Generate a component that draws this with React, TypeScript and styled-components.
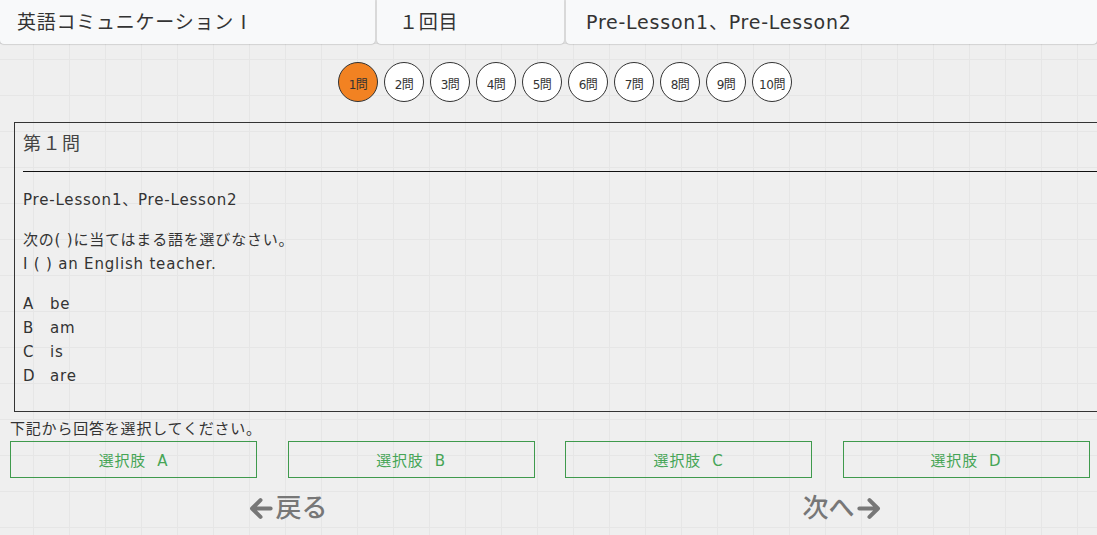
import React from "react";
import styled, { createGlobalStyle } from "styled-components";

const Global = createGlobalStyle`
  html, body { margin: 0; padding: 0; overflow: hidden; }
  body {
    font-family: "DejaVu Sans", "Noto Sans CJK JP", sans-serif;
    letter-spacing: 0.05em;
    color: #333;
    background-color: #efefef;
    background-image:
      linear-gradient(to right, #e6e6e6 1px, transparent 1px),
      linear-gradient(to bottom, #e6e6e6 1px, transparent 1px);
    background-size: 36px 36px;
    background-position: 33px 23px;
    min-height: 100vh;
  }
`;

const Header = styled.header`
  display: grid;
  grid-template-columns: 375px 187px 1fr;
  gap: 2px;
  height: 44px;
  background: #dcdcdc;
`;

const HeaderCell = styled.div<{ $pad: number; $cjk?: boolean }>`
  background: #f8f9fa;
  border-radius: 0 0 4px 4px;
  box-shadow: 0 1px 1px rgba(0, 0, 0, 0.12);
  display: flex;
  align-items: center;
  padding: 0 0 3px ${(p) => p.$pad}px;
  font-family: ${(p) => (p.$cjk ? '"Noto Sans CJK JP", sans-serif' : "inherit")};
  font-size: 19px;
  letter-spacing: 0.04em;
  color: #333;
  white-space: nowrap;
`;

const Main = styled.main`
  width: 1110px;
  padding: 0 10px;
`;

const Pager = styled.nav`
  display: flex;
  justify-content: center;
  gap: 6px;
  margin-top: 18px;
`;

const Dot = styled.div<{ $active?: boolean }>`
  width: 40px;
  height: 40px;
  box-sizing: border-box;
  border-radius: 50%;
  border: 1.5px solid #333;
  background: ${(p) => (p.$active ? "#f28222" : "#fff")};
  display: flex;
  align-items: center;
  justify-content: center;
  padding-top: 2px;
  font-size: 12px;
  color: #333;
  letter-spacing: -0.5px;
`;

const QuestionBox = styled.section`
  margin: 20px 0 0 4px;
  width: 1106px;
  box-sizing: border-box;
  border: 1px solid #333;
  padding: 8px 0 23px 8px;
  font-size: 15px;
  color: #333;
`;

const Title = styled.h2`
  margin: 0;
  font-size: 18px;
  font-weight: normal;
  line-height: 26px;
  color: #444;
  letter-spacing: 1.5px;
`;

const Rule = styled.hr`
  margin: 14px 0 1px;
  border: 0;
  border-top: 1px solid #111;
`;

const Para = styled.p`
  margin: 16px 0 0;
  line-height: 24px;
`;

const Choice = styled.div`
  display: flex;
  gap: 10px;
  line-height: 24px;
`;

const ChoiceKey = styled.span`
  width: 17px;
`;

const Instruction = styled.div`
  margin-top: 8px;
  font-size: 15px;
  line-height: 18px;
  color: #333;
`;

const Answers = styled.div`
  display: grid;
  grid-template-columns: repeat(4, 1fr);
  margin-top: 3px;
`;

const AnswerButton = styled.button`
  width: 247px;
  height: 37px;
  box-sizing: border-box;
  border: 1px solid #3f9a4d;
  background: transparent;
  color: #46a556;
  font-family: inherit;
  letter-spacing: inherit;
  font-size: 15px;
  padding: 0;
  cursor: pointer;
`;

const NavRow = styled.div`
  display: grid;
  grid-template-columns: 1fr 1fr;
  margin-top: 12px;
`;

const NavLink = styled.a`
  display: flex;
  align-items: center;
  justify-content: center;
  gap: 1px;
  font-size: 26px;
  line-height: 36px;
  font-weight: 500;
  letter-spacing: 0;
  color: #777;
  text-decoration: none;
`;

const Arrow = ({ dir }: { dir: "left" | "right" }) => (
  <svg width="27" height="27" viewBox="0 0 24 24" style={{ transform: dir === "right" ? "scaleX(-1)" : undefined }}>
    <path
      d="M21 12H5M12 4.5L4.5 12L12 19.5"
      fill="none"
      stroke="#777"
      strokeWidth="3.6"
      strokeLinecap="round"
      strokeLinejoin="round"
    />
  </svg>
);

export default function App() {
  const nums = Array.from({ length: 10 }, (_, i) => i + 1);
  return (
    <>
      <Global />
      <Header>
        <HeaderCell $pad={17} $cjk>英語コミュニケーションⅠ</HeaderCell>
        <HeaderCell $pad={22} $cjk>１回目</HeaderCell>
        <HeaderCell $pad={20}>Pre-Lesson1、Pre-Lesson2</HeaderCell>
      </Header>
      <Main>
        <Pager>
          {nums.map((n) => (
            <Dot key={n} $active={n === 1}>
              {n}問
            </Dot>
          ))}
        </Pager>
        <QuestionBox>
          <Title>第１問</Title>
          <Rule />
          <Para>Pre-Lesson1、Pre-Lesson2</Para>
          <Para>
            次の( )に当てはまる語を選びなさい。
            <br />I ( ) an English teacher.
          </Para>
          <Para as="div">
            <Choice><ChoiceKey>A</ChoiceKey><span>be</span></Choice>
            <Choice><ChoiceKey>B</ChoiceKey><span>am</span></Choice>
            <Choice><ChoiceKey>C</ChoiceKey><span>is</span></Choice>
            <Choice><ChoiceKey>D</ChoiceKey><span>are</span></Choice>
          </Para>
        </QuestionBox>
        <Instruction>下記から回答を選択してください。</Instruction>
        <Answers>
          {["A", "B", "C", "D"].map((k) => (
            <div key={k}>
              <AnswerButton>選択肢&nbsp;&nbsp;{k}</AnswerButton>
            </div>
          ))}
        </Answers>
        <NavRow>
          <NavLink href="#">
            <Arrow dir="left" />
            戻る
          </NavLink>
          <NavLink href="#">
            次へ
            <Arrow dir="right" />
          </NavLink>
        </NavRow>
      </Main>
    </>
  );
}
